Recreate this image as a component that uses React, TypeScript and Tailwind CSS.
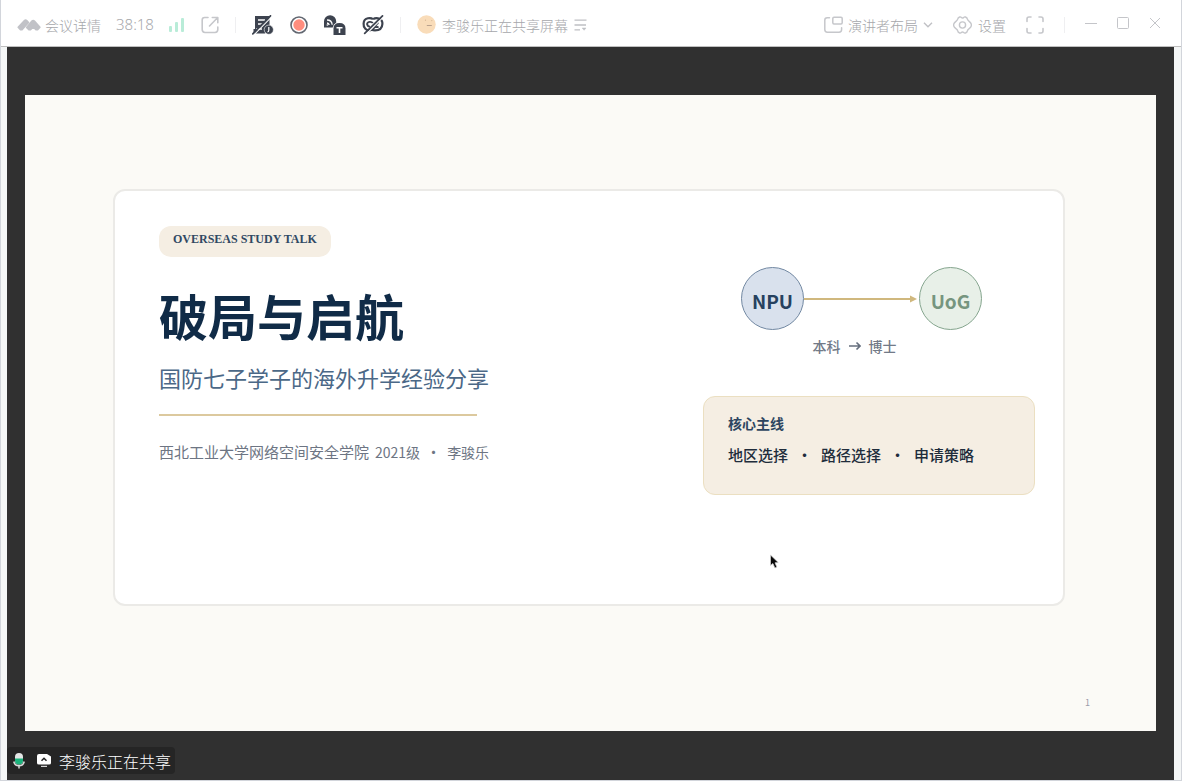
import type { ReactNode } from "react";

function BrandIcon() {
  return (
    <svg width="24" height="14" viewBox="0 0 24 14" fill="#c1c2c7" stroke="#c1c2c7" strokeWidth="1.600" strokeLinejoin="round">
      <path d="M1.200 9.300 7.500 2.600q1.100-1 2.200 0l1.800 1.900L5 11.800H3.500Z" />
      <path d="M9.600 9.500 15 3.100q1.200-1.300 2.400 0L22.900 9.300 20.600 11.800H19.200L16.200 9 13.500 11.800H11.900Z" />
    </svg>
  );
}

function SignalIcon() {
  return (
    <svg width="16" height="16" viewBox="0 0 16 16" fill="#b9ecd8">
      <rect x="0" y="9" width="3" height="6" rx="1" />
      <rect x="6" y="5" width="3" height="10" rx="1" />
      <rect x="12" y="1" width="3" height="14" rx="1" />
    </svg>
  );
}

function PopOutIcon() {
  return (
    <svg width="18" height="18" viewBox="0 0 18 18" fill="none" stroke="#c6c7cb" strokeWidth="1.600" strokeLinecap="round" strokeLinejoin="round">
      <path d="M7 1.500H3.600Q1.200 1.500 1.200 4v9.600Q1.200 16.500 4 16.500h10q2.800 0 2.800-2.900V11" />
      <path d="M11.300 1.500h5.500V6.800M16.500 1.800 8.500 10" />
    </svg>
  );
}

function NotesOffIcon() {
  return (
    <svg width="22" height="20" viewBox="0 0 22 20">
      <path d="M3 1h14.500v10L13 18.500H1.500V14H3Z" fill="#3d434f" />
      <path d="M6 5h7M6 9h5M4 14h6" stroke="#fff" strokeWidth="1.300" />
      <circle cx="16.800" cy="14.700" r="4.600" fill="#3d434f" stroke="#fff" strokeWidth=".6" />
      <path d="M16.800 12v3.200q0 1.500-1.300 1.800" fill="none" stroke="#fff" strokeWidth="1.200" />
      <path d="M2.100 19.700 19.600 1.900" stroke="#fff" strokeWidth="1.100" />
      <path d="M.8 18.800 18.500.8" stroke="#3d434f" strokeWidth="1.700" strokeLinecap="round" />
    </svg>
  );
}

function RecordIcon() {
  return (
    <svg width="18" height="18" viewBox="0 0 18 18">
      <circle cx="9" cy="9" r="8" fill="#fff" stroke="#626771" strokeWidth="1.600" />
      <circle cx="9" cy="9" r="5.700" fill="#ff8d7e" />
    </svg>
  );
}

function CaptionIcon() {
  return (
    <svg width="22" height="20" viewBox="0 0 22 20">
      <path d="M0 12.500V6.300a6.100 6.100 0 0 1 12.200 0v1.500Q9.300 9 8.700 12.500Z" fill="#3d434f" />
      <path d="M3 5q4.700 0 5.200 4.800M3 8q1.800.2 2.200 2" fill="none" stroke="#fff" strokeWidth="1.300" />
      <circle cx="3.300" cy="10" r=".8" fill="#fff" />
      <path d="M9.500 20v-6.500Q9.500 8 15.500 8q6 0 6 5.500V20Z" fill="#3d434f" />
      <path d="M12.500 12.700h6M15.500 12.700V18" stroke="#fff" strokeWidth="1.600" />
    </svg>
  );
}

function LinkOffIcon() {
  return (
    <svg width="22" height="20" viewBox="0 0 22 20" fill="none">
      <path d="M11 4.200C9.500 2.800 2 1.600 1.600 8.500c-.4 4.800 3 7 6 6.800 6 0 5.500-7.500 9-7.500M11 4.200c3.800-2.600 9.800-.5 9.400 4.800-.2 4.300-3 6.400-7.400 6.400-1.600 0-2.700-.5-3.400-1" stroke="#3d434f" strokeWidth="2.200" />
      <path d="M5 9.700c0-3.400 4.500-3.500 5.800-1.600M16.500 11.500c-1 .8-2.600.7-3.800-.3M5.200 9.200q.3 2.600 2.800 2.500" stroke="#3d434f" strokeWidth="1.800" />
      <path d="M4 19.300 21 2.400" stroke="#fff" strokeWidth="1.200" />
      <path d="M2.700 18.400 20.500.9" stroke="#3d434f" strokeWidth="1.700" strokeLinecap="round" />
    </svg>
  );
}

function FaceIcon() {
  return (
    <svg width="19" height="19" viewBox="0 0 19 19">
      <circle cx="9.500" cy="9.500" r="9.200" fill="#f9dcb9" />
      <circle cx="8.500" cy="5.200" r=".6" fill="#d4b594" />
      <circle cx="14.800" cy="5.600" r=".6" fill="#d4b594" />
      <path d="M9.800 10.500h5" stroke="#b9a18d" strokeWidth="1" />
    </svg>
  );
}

function ListIcon() {
  return (
    <svg width="13" height="12" viewBox="0 0 13 12" stroke="#bfc0c4" strokeWidth="1.300">
      <path d="M.5 1.200h12M.5 6h11.500M.5 10.800h5.500" />
      <path d="M8.200 9h3.800l-1.900 2.300Z" fill="#bfc0c4" strokeWidth=".5" />
    </svg>
  );
}

function LayoutIcon() {
  return (
    <svg width="19" height="18" viewBox="0 0 19 18" fill="none" stroke="#c6c7cb" strokeWidth="1.500" strokeLinecap="round">
      <rect x="8.800" y="1.300" width="9.400" height="6.700" rx="1.200" />
      <path d="M5.500 1.800H3.200Q.8 1.800.8 4.200v9.400q0 2.600 2.600 2.600H15q2.600 0 2.600-2.600v-1.800" />
    </svg>
  );
}

function ChevronIcon() {
  return (
    <svg width="10" height="6" viewBox="0 0 10 6" fill="none" stroke="#c0c1c5" strokeWidth="1.400">
      <path d="m1 .8 4 4 4-4" />
    </svg>
  );
}

function SettingsIcon() {
  return (
    <svg width="19" height="18" viewBox="0 0 19 18" fill="none" stroke="#c6c7cb" strokeWidth="1.400" strokeLinejoin="round">
      <path d="M6.600 1q1.200-.4 1.800.6.900.8 2.200 0 .8-1 1.900-.6 1.900.8 1.900 2.200.3 1.200 1.500 1.900 2.600 2 2.500 3.900.1 1.900-2.500 3.900-1.200.7-1.500 1.900 0 1.400-1.900 2.200-1.100.4-1.900-.6-1.300-.8-2.200 0-.6 1-1.800.6-1.900-.8-1.900-2.200-.3-1.200-1.500-1.900Q.5 10.900.6 9q-.1-1.900 2.600-3.900 1.200-.7 1.500-1.900 0-1.400 1.900-2.200Z" />
      <circle cx="9.500" cy="9" r="3.100" />
    </svg>
  );
}

function FullscreenIcon() {
  return (
    <svg width="18" height="18" viewBox="0 0 18 18" fill="none" stroke="#c6c7cb" strokeWidth="1.600" strokeLinecap="round">
      <path d="M1 5.500V3q0-2 2-2h2M13 1h2q2 0 2 2v2.500M17 12.500V15q0 2-2 2h-2M5 17H3q-2 0-2-2v-2.500" />
    </svg>
  );
}

function MicIcon() {
  return (
    <svg width="12" height="16" viewBox="0 0 12 16" fill="none">
      <rect x="2" y="0" width="8" height="11.500" rx="4" fill="#e4e6e6" />
      <path d="M2 5.500h8v2a4 4 0 0 1-8 0Z" fill="#1bb37c" />
      <path d="M.8 8.500q.8 4.300 5.200 4.300t5.200-4.300M6 12.500V15.500" stroke="#d9dddc" strokeWidth="1.500" />
    </svg>
  );
}

function ScreenShareIcon() {
  return (
    <svg width="14" height="13" viewBox="0 0 14 13">
      <path d="M2 0h8l4 2.500V9q0 1.500-2 1.500H2Q0 10.500 0 9V2q0-2 2-2Z" fill="#fff" />
      <path d="M4 12.400h6" stroke="#d5d5d5" strokeWidth="1.200" />
      <path d="m4.500 6.800 2.500-2.500 2.500 2.500" fill="none" stroke="#252525" strokeWidth="1.500" />
    </svg>
  );
}

function ToolButton({ label, children }: { label: string; children: ReactNode }) {
  return (
    <button type="button" aria-label={label} className="flex shrink-0 items-center justify-center">
      {children}
    </button>
  );
}

function Divider() {
  return <span className="h-4 w-px shrink-0 bg-[#efeff1]" />;
}

function TitleBar() {
  return (
    <header className="flex h-[47px] shrink-0 items-center justify-between border-b border-[#bfbfbf] bg-white pt-1 pr-5 pl-4 text-sm font-light whitespace-nowrap text-[#a6a7ab]">
      <div className="flex items-center gap-4">
        <button type="button" className="flex items-center gap-1">
          <BrandIcon />
          <span>会议详情</span>
        </button>
        <time className="-mx-px font-['Noto_Sans','Noto_Sans_CJK_SC',sans-serif] text-[15px]">38:18</time>
        <ToolButton label="网络状态"><SignalIcon /></ToolButton>
        <ToolButton label="弹出窗口"><PopOutIcon /></ToolButton>
        <Divider />
        <div className="flex items-center gap-4">
          <ToolButton label="关闭纪要"><NotesOffIcon /></ToolButton>
          <ToolButton label="录制"><RecordIcon /></ToolButton>
          <ToolButton label="字幕"><CaptionIcon /></ToolButton>
          <ToolButton label="断开链接"><LinkOffIcon /></ToolButton>
        </div>
        <Divider />
        <div className="flex items-center gap-1.5">
          <FaceIcon />
          <span>李骏乐正在共享屏幕</span>
          <button type="button" aria-label="共享列表"><ListIcon /></button>
        </div>
      </div>
      <div className="flex items-center gap-5">
        <button type="button" className="flex items-center gap-[5px]">
          <LayoutIcon />
          <span>演讲者布局</span>
          <ChevronIcon />
        </button>
        <button type="button" className="flex items-center gap-1.5">
          <SettingsIcon />
          <span>设置</span>
        </button>
        <ToolButton label="全屏"><FullscreenIcon /></ToolButton>
        <Divider />
        <div className="flex items-center gap-5 pb-1">
          <ToolButton label="最小化">
            <svg width="12" height="12" viewBox="0 0 12 12" stroke="#c4c5c9"><path d="M0 6.500h12" /></svg>
          </ToolButton>
          <ToolButton label="最大化">
            <svg width="12" height="12" viewBox="0 0 12 12" fill="none" stroke="#c4c5c9"><rect x=".5" y=".5" width="11" height="11" rx="1" /></svg>
          </ToolButton>
          <ToolButton label="关闭">
            <svg width="12" height="12" viewBox="0 0 12 12" stroke="#c4c5c9"><path d="m1 1 10 10M11 1 1 11" /></svg>
          </ToolButton>
        </div>
      </div>
    </header>
  );
}

function Pathway() {
  return (
    <figure className="ml-[38px] w-[241px]">
      <div className="flex items-center text-[19px] leading-6 font-bold">
        <div className="flex size-[63px] shrink-0 items-center justify-center rounded-full border border-[#7288a2] bg-[#d9e1ed] pt-1 text-[#27415f]">NPU</div>
        <svg className="h-2 min-w-0 flex-1" viewBox="0 0 115 8" preserveAspectRatio="none">
          <path d="M0 4h108" stroke="#d0b87e" strokeWidth="2" />
          <path d="m106 .5 7 3.500-7 3.500Z" fill="#d0b87e" />
        </svg>
        <div className="flex size-[63px] shrink-0 items-center justify-center rounded-full border border-[#85a58e] bg-[#e8f0e8] pt-1 text-[#76957f]">UoG</div>
      </div>
      <figcaption className="mt-1.5 flex items-center justify-center gap-2 pr-[14px] text-sm leading-5 font-medium text-[#727a88]">
        <span>本科</span>
        <svg width="12" height="10" viewBox="0 0 12 10" fill="none" stroke="#666f7e" strokeWidth="1.600"><path d="M0 5h11M7.500 1.500 11 5 7.500 8.500" /></svg>
        <span>博士</span>
      </figcaption>
    </figure>
  );
}

function Slide() {
  return (
    <article className="flex flex-1 flex-col bg-[#fbfaf6] pt-[94px] pr-[91px] pb-5 pl-[88px]">
      <section className="flex min-h-[417px] justify-between rounded-xl border-2 border-[#ebeae7] bg-white pt-[35px] pr-7 pb-10 pl-11">
        <div>
          <p className="w-fit rounded-xl bg-[#f5eee3] px-[14px] pt-1 pb-2 font-['Liberation_Serif',serif] text-xs leading-[19px] font-bold text-[#304963]">OVERSEAS STUDY TALK</p>
          <h1 className="mt-[22px] text-[49px] leading-[72px] font-bold text-[#102b47]">破局与启航</h1>
          <p className="mt-2.5 text-[22px] leading-8 text-[#4b6887]">国防七子学子的海外升学经验分享</p>
          <hr className="mt-[21px] w-[318px] border-t-2 border-[#dcc99e]" />
          <p className="mt-6 flex gap-1.5 text-[15px] leading-6 text-[#6d7583]">
            <span>西北工业大学网络空间安全学院</span>
            <span className="text-sm leading-6">2021级</span>
            <span>·</span>
            <span className="text-sm leading-6">李骏乐</span>
          </p>
        </div>
        <div className="w-[332px] pt-[41px]">
          <Pathway />
          <section className="mt-10 rounded-xl border border-[#ebdfc1] bg-[#f5eee3] px-6 pt-4 pb-[27px]">
            <h2 className="text-sm leading-5 font-bold text-[#2d4560]">核心主线</h2>
            <p className="mt-[10px] flex gap-[9px] text-[15px] leading-6 font-medium text-[#202c3b]">
              <span>地区选择</span>
              <span>·</span>
              <span>路径选择</span>
              <span>·</span>
              <span>申请策略</span>
            </p>
          </section>
        </div>
      </section>
      <footer className="mt-auto -mr-[25px] text-right text-[9px] leading-4 text-[#9c9caa]">1</footer>
    </article>
  );
}

export default function App() {
  return (
    <div className="flex min-h-screen flex-col border-x border-b border-[#d2d5db] bg-[#f4f6f6] font-['Noto_Sans_CJK_SC',sans-serif]">
      <TitleBar />
      <main className="relative mr-[7px] ml-1.5 flex flex-1 flex-col bg-[#303030] px-[18px] pt-12 pb-[49px]">
        <Slide />
        <div className="absolute bottom-1.5 left-0 flex h-[27px] items-center gap-2 rounded-sm bg-[#252525] pr-1 pl-1.5 text-base leading-6 font-light text-white">
          <MicIcon />
          <span className="flex items-center gap-2 pl-1"><ScreenShareIcon />李骏乐正在共享</span>
        </div>
        <svg className="absolute top-[507px] left-[762px]" width="12" height="16" viewBox="0 0 12 16" aria-hidden="true">
          <path d="M1.500 1v10.500l2.400-2 2 4.500 2-.9-1.900-4.300 3.300-.2Z" fill="#080808" stroke="#d8d8d8" strokeWidth=".7" />
        </svg>
      </main>
    </div>
  );
}
